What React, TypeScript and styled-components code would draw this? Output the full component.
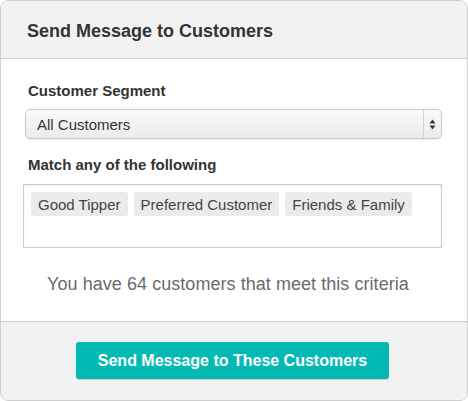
import React from "react";
import styled, { createGlobalStyle } from "styled-components";

const Global = createGlobalStyle`
  html, body { margin: 0; padding: 0; background: #fff; }
  body { font-family: "Liberation Sans", Arial, Helvetica, sans-serif; }
  * { box-sizing: border-box; }
`;

const Card = styled.div`
  width: 468px;
  height: 401px;
  border: 1px solid #cfcfcf;
  border-radius: 8px;
  overflow: hidden;
  display: flex;
  flex-direction: column;
  background: #fff;
`;

const Header = styled.div`
  height: 58px;
  flex: none;
  background: #f2f2f2;
  border-bottom: 1px solid #cccccc;
  display: flex;
  align-items: center;
  padding: 4px 0 0 26px;
`;

const Title = styled.h1`
  margin: 0;
  font-size: 18px;
  font-weight: bold;
  color: #333;
`;

const Body = styled.div`
  display: flex;
  flex-direction: column;
  padding: 23px 25px 0 22px;
  flex: none;
  height: 262px;
`;

const Label = styled.div<{ $top?: number }>`
  font-size: 15px;
  font-weight: bold;
  color: #333;
  line-height: 18px;
  margin-left: 5px;
  margin-top: ${(p) => p.$top ?? 0}px;
`;

const Select = styled.div`
  margin: 9px 0 0 2px;
  height: 30px;
  border: 1px solid #c8c8c8;
  border-radius: 5px;
  background: linear-gradient(#fafafa, #ebebeb);
  box-shadow: 0 1px 1px rgba(0, 0, 0, 0.08);
  display: flex;
  align-items: stretch;
`;

const SelectText = styled.div`
  flex: 1;
  display: flex;
  align-items: center;
  padding-left: 11px;
  font-size: 15px;
  color: #333;
`;

const SelectArrow = styled.div`
  width: 18px;
  border-left: 1px solid #d2d2d2;
  display: flex;
  align-items: center;
  justify-content: center;
`;

const TagBox = styled.div`
  margin-top: 10px;
  height: 64px;
  border: 1px solid #cccccc;
  box-shadow: inset 0 2px 3px rgba(0, 0, 0, 0.05);
  padding: 7px 7px;
  display: flex;
  align-items: flex-start;
  gap: 6px;
`;

const Tag = styled.span`
  height: 24px;
  padding: 0 7px;
  background: #ebebeb;
  border-radius: 3px;
  font-size: 15px;
  color: #444;
  display: flex;
  align-items: center;
`;

const Summary = styled.div`
  margin-top: 25px;
  text-align: center;
  font-size: 18px;
  line-height: 22px;
  color: #6a6a6a;
  padding-right: 9px;
  letter-spacing: 0.05px;
`;

const Footer = styled.div`
  flex: 1;
  background: #f2f2f2;
  border-top: 1px solid #cccccc;
  display: flex;
  justify-content: flex-start;
  align-items: flex-start;
  padding: 20px 0 0 75px;
`;

const Button = styled.button`
  width: 313px;
  height: 37px;
  border: none;
  border-radius: 3px;
  background: #03b9b4;
  box-shadow: 0 1px 1px rgba(0, 0, 0, 0.15);
  color: #fff;
  font-family: inherit;
  font-size: 16px;
  font-weight: bold;
  cursor: pointer;
  padding: 0;
`;

export default function App() {
  return (
    <>
      <Global />
      <Card>
        <Header>
          <Title>Send Message to Customers</Title>
        </Header>
        <Body>
          <Label>Customer Segment</Label>
          <Select>
            <SelectText>All Customers</SelectText>
            <SelectArrow>
              <svg width="7" height="11" viewBox="0 0 7 11">
                <path d="M3.5 0.5 L6.5 4.5 L0.5 4.5 Z" fill="#333" />
                <path d="M3.5 10.5 L6.5 6.5 L0.5 6.5 Z" fill="#333" />
              </svg>
            </SelectArrow>
          </Select>
          <Label $top={17}>Match any of the following</Label>
          <TagBox>
            <Tag>Good Tipper</Tag>
            <Tag>Preferred Customer</Tag>
            <Tag>Friends &amp; Family</Tag>
          </TagBox>
          <Summary>You have 64 customers that meet this criteria</Summary>
        </Body>
        <Footer>
          <Button>Send Message to These Customers</Button>
        </Footer>
      </Card>
    </>
  );
}
